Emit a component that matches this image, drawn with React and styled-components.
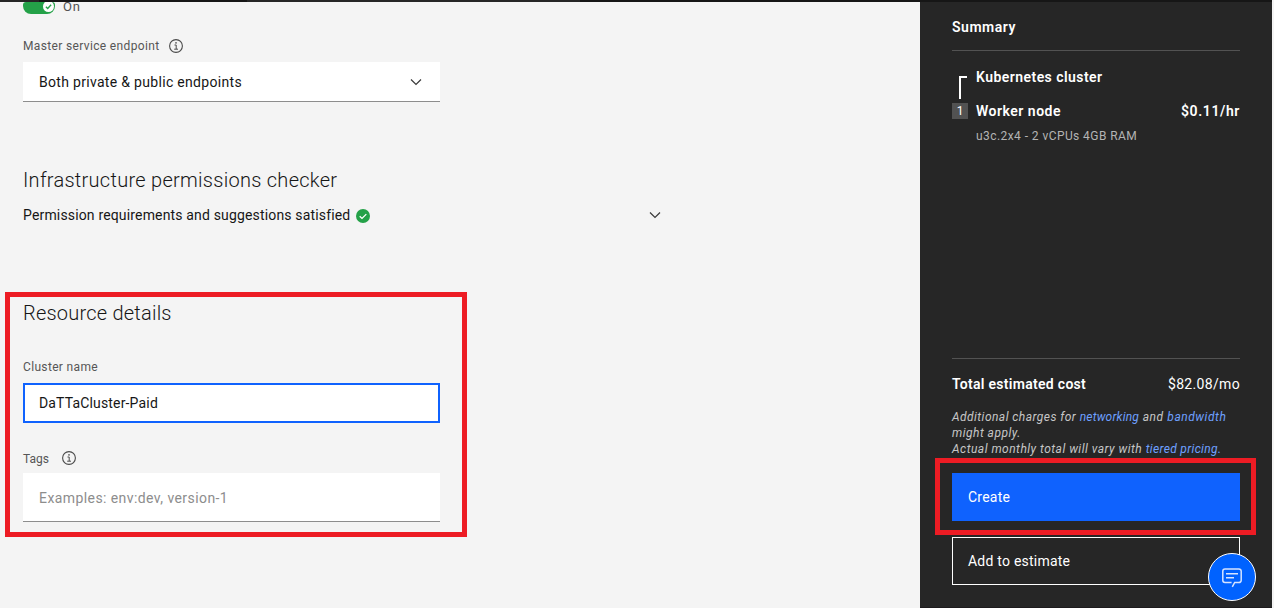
import React from 'react';
import styled, { createGlobalStyle } from 'styled-components';

const GlobalStyle = createGlobalStyle`
  *, *::before, *::after { box-sizing: border-box; }
  body {
    margin: 0;
    background: #f4f4f4;
    color: #161616;
    font-family: Roboto, "Liberation Sans", sans-serif;
    font-size: 14px;
    line-height: 18px;
  }
`;

const Page = styled.div`
  position: relative;
  display: flex;
  flex-direction: column;
  width: 1274px;
  height: 608px;
  overflow: hidden;
`;

const TopBar = styled.header`
  display: flex;
  flex: none;
  width: 1272px;
  height: 2px;
  background: #161616;
`;

const TopBarSegment = styled.div`
  width: ${(p) => p.$width}px;
  background: ${(p) => p.$color};
`;

const Body = styled.div`
  display: flex;
  flex: 1;
  width: 1272px;
  min-height: 0;
`;

const Main = styled.main`
  width: 920px;
  padding-left: 23px;
  background: #f4f4f4;
`;

const Text = styled.span`
  letter-spacing: ${(p) => p.$track || 0}px;
  white-space: pre;
`;

const ToggleRow = styled.div`
  display: flex;
  align-items: flex-end;
  gap: 8px;
  height: 12px;
  color: #525252;
`;

const Toggle = styled.div`
  display: flex;
  align-items: flex-end;
  justify-content: flex-end;
  width: 32px;
  height: 12px;
  padding: 0 1px 2px 0;
  border-radius: 3px 3px 8px 8px;
  background: #24a148;
`;

const ToggleLabel = styled.span`
  height: 12px;
  font-size: 13px;
  line-height: 10px;
  letter-spacing: 0.9px;
`;

const LabelRow = styled.div`
  display: flex;
  align-items: center;
  gap: ${(p) => p.$gap || 0}px;
  height: 16px;
  margin-top: ${(p) => p.$top}px;
  font-size: 12px;
  line-height: 16px;
  color: #565656;

  svg { flex: none; margin-top: ${(p) => p.$iconShift || 0}px; }
`;

const Select = styled.div`
  display: flex;
  align-items: center;
  justify-content: space-between;
  width: 417px;
  height: 40px;
  margin-top: 8px;
  padding: 1px 16px 0;
  border-bottom: 1px solid #8d8d8d;
  background: #fff;
`;

const Heading = styled.h2`
  height: 26px;
  margin: ${(p) => p.$top}px 0 0;
  font-size: 20px;
  font-weight: 350;
  line-height: 26px;
  letter-spacing: ${(p) => p.$track}px;
`;

const CheckerRow = styled.div`
  display: flex;
  align-items: center;
  justify-content: space-between;
  width: 640px;
  height: 18px;
  margin-top: 13px;
`;

const CheckerStatus = styled.div`
  display: flex;
  align-items: center;
  gap: 6px;

  svg { margin-top: 2px; }
`;

const Input = styled.input`
  display: block;
  width: 417px;
  height: ${(p) => p.$height}px;
  margin-top: ${(p) => p.$top}px;
  padding: ${(p) => (p.$active ? '0 14px' : '2px 16px 0')};
  border: ${(p) => (p.$active ? '2px solid #0f62fe' : '0 solid #8d8d8d')};
  border-bottom-width: ${(p) => (p.$active ? 2 : 1)}px;
  border-radius: 0;
  outline: none;
  background: #fff;
  color: #161616;
  font: 14px/18px Roboto, "Liberation Sans", sans-serif;
  letter-spacing: ${(p) => p.$track}px;

  &::placeholder { color: #8d8d8d; opacity: 1; }
`;

const Sidebar = styled.aside`
  display: flex;
  flex-direction: column;
  width: 352px;
  padding: 16px 32px 0;
  border-bottom: 1px solid #1d1b1d;
  background: #262626;
  color: #fff;
`;

const SidebarTitle = styled.h3`
  margin: 0;
  padding-bottom: 14px;
  border-bottom: 1px solid #525252;
  font-size: 14px;
  font-weight: 600;
  line-height: 18px;
  letter-spacing: 0.53px;
`;

const OrderTree = styled.div`
  display: grid;
  grid-template-columns: 16px 1fr auto;
  grid-template-rows: 34px 18px 24px;
  column-gap: 8px;
  flex: 1;
  margin-top: 17px;
  font-weight: 600;
`;

const Connector = styled.div`
  width: 8px;
  height: 23px;
  margin: 8px 0 0 7px;
  border-top: 2px solid #fff;
  border-left: 2px solid #fff;
`;

const ItemName = styled.div`
  grid-column: 2;
  letter-spacing: ${(p) => p.$track}px;
`;

const Count = styled.div`
  height: 16px;
  margin-top: 1px;
  background: #525252;
  font-size: 12px;
  font-weight: 400;
  line-height: 16px;
  text-align: center;
`;

const Spec = styled.div`
  grid-column: 2 / 4;
  padding-top: 8px;
  color: #b4b4b4;
  font-size: 12px;
  font-weight: 400;
  line-height: 16px;
  letter-spacing: 0.43px;
`;

const TotalRow = styled.div`
  display: flex;
  justify-content: space-between;
  padding-top: 16px;
  border-top: 1px solid #525252;
`;

const Bold = styled.strong`
  font-weight: 600;
  letter-spacing: ${(p) => p.$track}px;
`;

const Note = styled.p`
  margin: 16px 0 0;
  color: #c6c6c6;
  font-size: 12px;
  font-style: italic;
  line-height: 16px;
  white-space: nowrap;
`;

const Link = styled.a`
  color: #6ea0ff;
  letter-spacing: ${(p) => p.$track}px;
`;

const Button = styled.button`
  height: 48px;
  margin: ${(p) => p.$top}px 0 ${(p) => p.$bottom || 0}px;
  padding: 0 15px;
  border: 1px solid ${(p) => (p.$primary ? '#0f62fe' : '#fff')};
  background: ${(p) => (p.$primary ? '#0f62fe' : 'transparent')};
  color: #fff;
  font: 14px/18px Roboto, "Liberation Sans", sans-serif;
  letter-spacing: 0.23px;
  text-align: left;
`;

/* Red callout frames lie over the page content. */
const Callout = styled.div`
  position: absolute;
  left: ${(p) => p.$x}px;
  top: ${(p) => p.$y}px;
  width: ${(p) => p.$w}px;
  height: ${(p) => p.$h}px;
  border: 5px solid #ed1c24;
  pointer-events: none;
`;

const ChatButton = styled.button`
  position: absolute;
  right: 18px;
  bottom: 7px;
  display: grid;
  place-items: center;
  width: 48px;
  height: 48px;
  padding: 1px 0 0;
  border: 1px solid #fff;
  border-radius: 50%;
  background: #0062ff;
`;

const InfoIcon = () => (
  <svg width="14" height="14" viewBox="0 0 14 14" fill="none" stroke="#4a4a4a">
    <circle cx="7" cy="7" r="6.4" strokeWidth="1.1" />
    <path d="M5.5 6h1.7v4M5.2 10.2h3.8" strokeWidth="1" />
    <circle cx="7" cy="3.9" r="0.8" fill="#4a4a4a" stroke="none" />
  </svg>
);

const Chevron = () => (
  <svg width="16" height="16" viewBox="0 0 16 16" fill="none" stroke="#393939" strokeWidth="1.2">
    <path d="M3 5.5l5 5 5-5" />
  </svg>
);

const KnobCheck = () => (
  <svg width="11" height="10" viewBox="0 1 11 10" fill="none">
    <circle cx="5.5" cy="5.5" r="5.5" fill="#fff" />
    <path d="M2.9 5.7l1.8 1.7 3.4-3.6" stroke="#24a148" strokeWidth="1.4" />
  </svg>
);

const SuccessIcon = () => (
  <svg width="14" height="14" viewBox="0 0 14 14" fill="none">
    <circle cx="7" cy="7" r="7" fill="#24a148" />
    <path d="M3.7 7.2l2.3 2.2 4.3-4.3" stroke="#fff" strokeWidth="1.3" />
  </svg>
);

const ChatIcon = () => (
  <svg width="20" height="20" viewBox="0 0 20 20" fill="none" stroke="#d6e4ff" strokeWidth="1.5">
    <path d="M10.3 18.8l2.4-4.3H17a2.2 2.2 0 0 0 2.2-2.2V3.2A2.2 2.2 0 0 0 17 1H3A2.2 2.2 0 0 0 .8 3.2v9.1A2.2 2.2 0 0 0 3 14.5h6.6" />
    <path d="M4 5.7h12M4 9.7h8" />
  </svg>
);

export default function App() {
  return (
    <Page>
      <GlobalStyle />
      <TopBar>
        <TopBarSegment $width={39} $color="#262626" />
        <TopBarSegment $width={208} $color="#161616" />
        <TopBarSegment $width={333} $color="#262626" />
      </TopBar>
      <Body>
        <Main>
          <ToggleRow>
            <Toggle><KnobCheck /></Toggle>
            <ToggleLabel>On</ToggleLabel>
          </ToggleRow>
          <LabelRow $top={24} $gap={10}>
            <Text $track={0.35}>Master service endpoint</Text>
            <InfoIcon />
          </LabelRow>
          <Select>
            <Text $track={0.31}>Both private &amp; public endpoints</Text>
            <Chevron />
          </Select>

          <Heading $top={65} $track={0.28}>Infrastructure permissions checker</Heading>
          <CheckerRow>
            <CheckerStatus>
              <Text $track={0.16}>Permission requirements and suggestions satisfied</Text>
              <SuccessIcon />
            </CheckerStatus>
            <Chevron />
          </CheckerRow>

          <Heading $top={76} $track={0.22}>Resource details</Heading>
          <LabelRow $top={33}>
            <Text $track={0.34}>Cluster name</Text>
          </LabelRow>
          <Input $active $height={40} $top={8} $track={0.16} defaultValue="DaTTaCluster-Paid" />
          <LabelRow $top={28} $gap={13} $iconShift={-2}>
            <Text>Tags</Text>
            <InfoIcon />
          </LabelRow>
          <Input $height={49} $top={6} $track={0.42} placeholder="Examples: env:dev, version-1" />
        </Main>

        <Sidebar>
          <SidebarTitle>Summary</SidebarTitle>
          <OrderTree>
            <Connector />
            <ItemName $track={0.45}>Kubernetes cluster</ItemName>
            <span />
            <Count>1</Count>
            <ItemName $track={0.5}>Worker node</ItemName>
            <Text $track={0.61}>$0.11/hr</Text>
            <Spec>u3c.2x4 - 2 vCPUs 4GB RAM</Spec>
          </OrderTree>
          <TotalRow>
            <Bold $track={0.29}>Total estimated cost</Bold>
            <Text $track={0.33}>$82.08/mo</Text>
          </TotalRow>
          <Note>
            <Text $track={0.45}>Additional charges for </Text>
            <Link $track={0.2}>networking</Link>
            <Text $track={0.6}> and </Text>
            <Link $track={0.54}>bandwidth</Link>
            <br />
            <Text $track={0.48}>might apply.</Text>
            <br />
            <Text $track={0.48}>Actual monthly total will vary with </Text>
            <Link $track={0.34}>tiered pricing.</Link>
          </Note>
          <Button $primary $top={16}>Create</Button>
          <Button $top={16} $bottom={22}>Add to estimate</Button>
        </Sidebar>
      </Body>

      <Callout $x={5} $y={292} $w={462} $h={245} />
      <Callout $x={935} $y={458} $w={321} $h={77} />
      <ChatButton aria-label="Chat"><ChatIcon /></ChatButton>
    </Page>
  );
}
